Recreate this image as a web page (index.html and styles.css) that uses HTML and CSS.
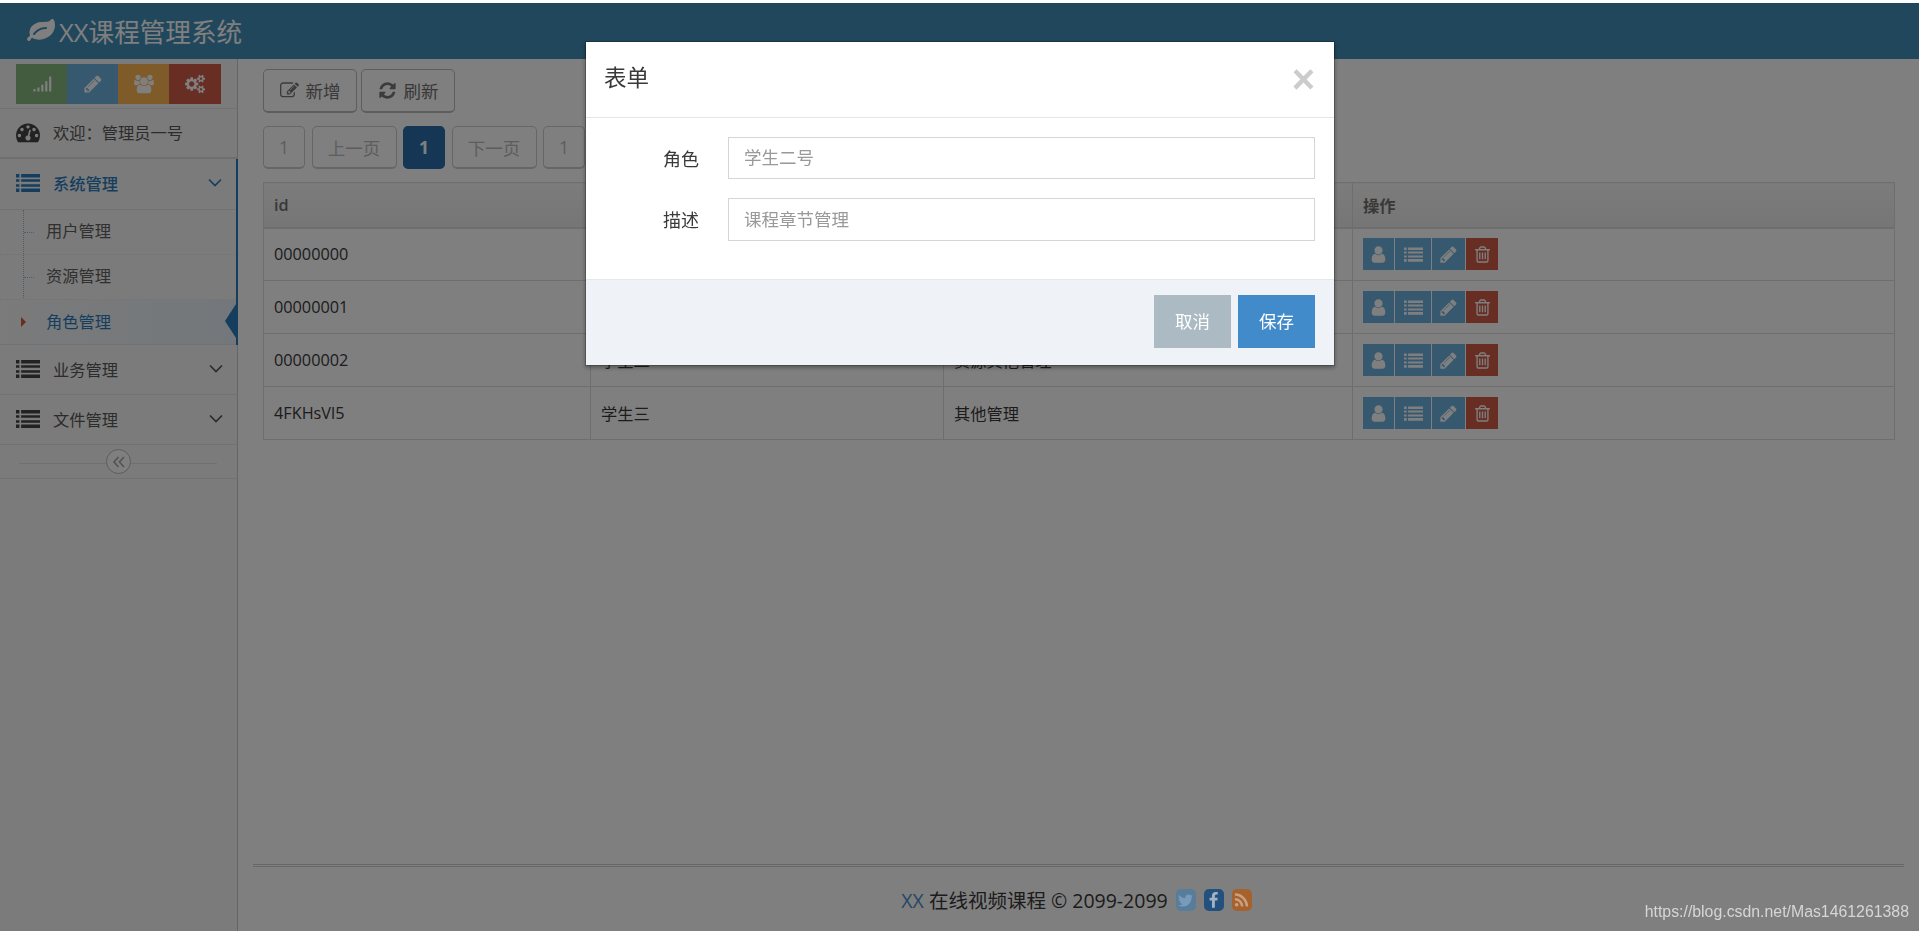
FILE: index.html
```html
<!DOCTYPE html>
<html lang="zh-CN">
<head>
    <meta charset="UTF-8">
    <title>XX课程管理系统</title>
    <link rel="stylesheet" href="styles.css">
</head>
<body>
<svg class="defs" xmlns="http://www.w3.org/2000/svg">
    <symbol id="i-leaf" viewBox="0 0 1792 1792"><path d="M1280 704q0-26-19-45t-45-19q-172 0-318 49.5t-259.5 134-235.5 219.5q-19 21-19 45 0 26 19 45t45 19q24 0 45-19 27-24 74-71t67-66q137-124 268.5-176t313.5-52q26 0 45-19t19-45zm512-198q0 95-20 193-46 224-184.5 383t-357.5 268q-214 108-438 108-148 0-286-47-15-5-88-42t-96-37q-16 0-39.5 32t-45 70-52.5 70-60 32q-43 0-63.5-17.5t-45.5-59.5q-2-4-6-11t-5.5-10-3-9.5-1.5-13.5q0-35 31-73.5t68-65.5 68-56 31-48q0-4-14-38t-16-44q-9-51-9-104 0-115 43.5-220t119-184.5 170.5-139 204-95.5q55-18 145-25.5t179.5-9 178.5-6 163.5-24 113.5-56.5l29.5-29.5 29.5-28 27-20 36.5-16 43.5-4.5q39 0 70.5 46t47.5 112 24 124 8 96z"/></symbol>
    <symbol id="i-signal" viewBox="0 0 1792 1792"><path d="M128 1344h192v224h-192zM480 1216h192v352h-192zM832 960h192v608h-192zM1184 640h192v928h-192zM1536 224h192v1344h-192z"/></symbol>
    <symbol id="i-pencil" viewBox="0 0 1792 1792"><path d="M491 1536l91-91-235-235-91 91v107h128v128h107zm523-928q0-22-22-22-10 0-17 7l-542 542q-7 7-7 17 0 22 22 22 10 0 17-7l542-542q7-7 7-17zm-54-192l416 416-832 832h-416v-416zm683 96q0 53-37 90l-166 166-416-416 166-165q36-38 90-38 53 0 91 38l235 234q37 39 37 91z"/></symbol>
    <symbol id="i-group" viewBox="0 0 1920 1792"><path d="M593 896q-162 5-265 128h-134q-82 0-138-40.5t-56-118.5q0-353 124-353 6 0 43.5 21t97.5 42.5 119 21.5q67 0 133-23-5 37-5 66 0 139 81 256zm1071 637q0 120-73 189.5t-194 69.5h-874q-121 0-194-69.5t-73-189.5q0-53 3.5-103.5t14-109 26.5-108.5 43-97.5 62-81 85.5-53.5 111.5-20q10 0 43 21.5t73 48 107 48 135 21.5 135-21.5 107-48 73-48 43-21.5q61 0 111.5 20t85.5 53.5 62 81 43 97.5 26.5 108.5 14 109 3.5 103.5zm-1024-1277q0 106-75 181t-181 75-181-75-75-181 75-181 181-75 181 75 75 181zm704 384q0 159-112.5 271.5t-271.5 112.5-271.5-112.5-112.5-271.5 112.5-271.5 271.5-112.5 271.5 112.5 112.5 271.5zm576 225q0 78-56 118.5t-138 40.5h-134q-103-123-265-128 81-117 81-256 0-29-5-66 66 23 133 23 59 0 119-21.5t97.5-42.5 43.5-21q124 0 124 353zm-128-609q0 106-75 181t-181 75-181-75-75-181 75-181 181-75 181 75 75 181z"/></symbol>
    <symbol id="i-cogs" viewBox="0 0 1920 1792"><path d="M896 896q0-106-75-181t-181-75-181 75-75 181 75 181 181 75 181-75 75-181zm768 512q0-52-38-90t-90-38-90 38-38 90q0 53 37.5 90.5t90.5 37.5 90.5-37.5 37.5-90.5zm0-1024q0-52-38-90t-90-38-90 38-38 90q0 53 37.5 90.5t90.5 37.5 90.5-37.5 37.5-90.5zm-384 421v185q0 10-7 19.5t-16 10.5l-155 24q-11 35-32 76 34 48 90 115 7 11 7 20 0 12-7 19-23 30-82.5 89.5t-78.5 59.5q-11 0-21-7l-115-90q-37 19-77 31-11 108-23 155-7 24-30 24h-186q-11 0-20-7.5t-10-17.5l-23-153q-34-10-75-31l-118 89q-7 7-20 7-11 0-21-8-144-133-144-160 0-9 7-19 10-14 41-53t47-61q-23-44-35-82l-152-24q-10-1-17-9.5t-7-19.5v-185q0-10 7-19.5t16-10.5l155-24q11-35 32-76-34-48-90-115-7-11-7-20 0-12 7-20 22-30 82-89t79-59q11 0 21 7l115 90q34-18 77-32 11-108 23-154 7-24 30-24h186q11 0 20 7.5t10 17.5l23 153q34 10 75 31l118-89q8-7 20-7 11 0 21 8 144 133 144 160 0 8-7 19-12 16-42 54t-45 60q23 48 34 82l152 23q10 2 17 10.5t7 19.5zm640 533v140q0 16-149 31-12 27-30 52 51 113 51 138 0 4-4 7-122 71-124 71-8 0-46-47t-52-68q-20 2-30 2t-30-2q-14 21-52 68t-46 47q-2 0-124-71-4-3-4-7 0-25 51-138-18-25-30-52-149-15-149-31v-140q0-16 149-31 13-29 30-52-51-113-51-138 0-4 4-7 4-2 35-20t59-34 30-16q8 0 46 46.5t52 67.5q20-2 30-2t30 2q51-71 92-112l6-2q4 0 124 70 4 3 4 7 0 25-51 138 17 23 30 52 149 15 149 31zm0-1024v140q0 16-149 31-12 27-30 52 51 113 51 138 0 4-4 7-122 71-124 71-8 0-46-47t-52-68q-20 2-30 2t-30-2q-14 21-52 68t-46 47q-2 0-124-71-4-3-4-7 0-25 51-138-18-25-30-52-149-15-149-31v-140q0-16 149-31 13-29 30-52-51-113-51-138 0-4 4-7 4-2 35-20t59-34 30-16q8 0 46 46.5t52 67.5q20-2 30-2t30 2q51-71 92-112l6-2q4 0 124 70 4 3 4 7 0 25-51 138 17 23 30 52 149 15 149 31z"/></symbol>
    <symbol id="i-dashboard" viewBox="0 0 1792 1792"><path d="M384 1152q0-53-37.5-90.5t-90.5-37.5-90.5 37.5-37.5 90.5 37.5 90.5 90.5 37.5 90.5-37.5 37.5-90.5zm192-448q0-53-37.5-90.5t-90.5-37.5-90.5 37.5-37.5 90.5 37.5 90.5 90.5 37.5 90.5-37.5 37.5-90.5zm428 481l101-382q6-26-7.5-48.5t-38.5-29.5-48 6.5-30 39.5l-101 382q-60 5-107 43.5t-63 98.5q-20 77 20 146t117 89 146-20 89-117q16-60-6-117t-72-91zm660-33q0-53-37.5-90.5t-90.5-37.5-90.5 37.5-37.5 90.5 37.5 90.5 90.5 37.5 90.5-37.5 37.5-90.5zm-640-640q0-53-37.5-90.5t-90.5-37.5-90.5 37.5-37.5 90.5 37.5 90.5 90.5 37.5 90.5-37.5 37.5-90.5zm448 192q0-53-37.5-90.5t-90.5-37.5-90.5 37.5-37.5 90.5 37.5 90.5 90.5 37.5 90.5-37.5 37.5-90.5zm320 448q0 261-141 483-19 29-54 29h-1402q-35 0-54-29-141-221-141-483 0-182 71-348t191-286 286-191 348-71 348 71 286 191 191 286 71 348z"/></symbol>
    <symbol id="i-list" viewBox="0 0 1792 1792"><path d="M0 224h256v256h-256zM0 608h256v192h-256zM0 992h256v192h-256zM0 1312h256v256h-256zM384 224h1408v256h-1408zM384 608h1408v192h-1408zM384 992h1408v192h-1408zM384 1312h1408v256h-1408z"/></symbol>
    <symbol id="i-edit" viewBox="0 0 1792 1792"><path d="M888 1184l116-116-152-152-116 116v56h96v96h56zm440-720q-16-16-33 1l-350 350q-17 17-1 33t33-1l350-350q17-17 1-33zm80 594v190q0 119-84.5 203.5t-203.5 84.5h-832q-119 0-203.5-84.5t-84.5-203.5v-832q0-119 84.5-203.5t203.5-84.5h832q63 0 117 25 15 7 18 23 3 17-9 29l-49 49q-14 14-32 8-23-6-45-6h-832q-66 0-113 47t-47 113v832q0 66 47 113t113 47h832q66 0 113-47t47-113v-126q0-13 9-22l64-64q15-15 35-7t20 29zm-96-738l288 288-672 672h-288v-288zm444 132l-92 92-288-288 92-92q28-28 68-28t68 28l152 152q28 28 28 68t-28 68z"/></symbol>
    <symbol id="i-refresh" viewBox="0 0 1792 1792"><path d="M1639 1056q0 5-1 7-64 268-268 434.5t-478 166.5q-146 0-282.5-55t-243.5-157l-129 129q-19 19-45 19t-45-19-19-45v-448q0-26 19-45t45-19h448q26 0 45 19t19 45-19 45l-137 137q71 66 161 102t187 36q134 0 250-65t186-179q11-17 53-117 8-23 30-23h192q13 0 22.5 9.5t9.5 22.5zm25-800v448q0 26-19 45t-45 19h-448q-26 0-45-19t-19-45 19-45l138-138q-148-137-349-137-134 0-250 65t-186 179q-11 17-53 117-8 23-30 23h-199q-13 0-22.5-9.5t-9.5-22.5v-7q65-268 270-434.5t480-166.5q146 0 284 55.5t245 156.5l130-129q19-19 45-19t45 19 19 45z"/></symbol>
    <symbol id="i-user" viewBox="0 0 1792 1792"><path d="M1536 1399q0 109-62.5 187t-150.5 78h-854q-88 0-150.5-78t-62.5-187q0-85 8.5-160.5t31.5-152 58.5-131 94-89 134.5-34.5q131 128 313 128t313-128q76 0 134.5 34.5t94 89 58.5 131 31.5 152 8.5 160.5zm-256-887q0 159-112.5 271.5t-271.5 112.5-271.5-112.5-112.5-271.5 112.5-271.5 271.5-112.5 271.5 112.5 112.5 271.5z"/></symbol>
    <symbol id="i-trash" viewBox="0 0 1792 1792"><path d="M704 736v576q0 14-9 23t-23 9h-64q-14 0-23-9t-9-23v-576q0-14 9-23t23-9h64q14 0 23 9t9 23zm256 0v576q0 14-9 23t-23 9h-64q-14 0-23-9t-9-23v-576q0-14 9-23t23-9h64q14 0 23 9t9 23zm256 0v576q0 14-9 23t-23 9h-64q-14 0-23-9t-9-23v-576q0-14 9-23t23-9h64q14 0 23 9t9 23zm128 724v-948h-896v948q0 22 7 40.5t14.5 27 10.5 8.5h832q3 0 10.5-8.5t14.5-27 7-40.5zm-672-1076h448l-48-117q-7-9-17-11h-317q-10 2-17 11zm928 32v64q0 14-9 23t-23 9h-96v948q0 83-47 143.5t-113 60.5h-832q-66 0-113-58.5t-47-141.5v-952h-96q-14 0-23-9t-9-23v-64q0-14 9-23t23-9h309l70-167q15-37 54-63t79-26h320q40 0 79 26t54 63l70 167h309q14 0 23 9t9 23z"/></symbol>
    <symbol id="i-twitter" viewBox="0 0 1792 1792"><path d="M1684 408q-67 98-162 167 1 14 1 42 0 130-38 259.5t-115.5 248.5-184.5 210.5-258 146-323 54.5q-271 0-496-145 35 4 78 4 225 0 401-138-105-2-188-64.5t-114-159.5q33 5 61 5 43 0 85-11-112-23-185.5-111.5t-73.5-205.5v-4q68 38 146 41-66-44-105-115t-39-154q0-88 44-163 121 149 294.5 238.5t371.5 99.5q-8-38-8-74 0-134 94.5-228.5t228.5-94.5q140 0 236 102 109-21 205-78-37 115-142 178 91-10 182-49z"/></symbol>
    <symbol id="i-facebook" viewBox="0 0 1792 1792"><path d="M1343 12v264h-157q-86 0-116 36t-30 108v189h293l-39 296h-254v759h-306v-759h-255v-296h255v-218q0-186 104-288.5t277-102.5q147 0 228 12z"/></symbol>
    <symbol id="i-rss" viewBox="0 0 1792 1792"><path d="M576 1344q0 80-56 136t-136 56-136-56-56-136 56-136 136-56 136 56 56 136zm512 123q2 28-17 48-18 21-47 21h-135q-25 0-43-16.5t-20-41.5q-22-229-184.5-391.5t-391.5-184.5q-25-2-41.5-20t-16.5-43v-135q0-29 21-47 17-17 43-17h5q160 13 306 80.5t259 181.5q114 113 181.5 259t80.5 306zm512 2q2 27-18 47-18 20-46 20h-143q-26 0-44.5-17.5t-19.5-42.5q-12-215-101-408.5t-231.5-336-336-231.5-408.5-102q-25-1-42.5-19.5t-17.5-43.5v-143q0-28 20-46 18-18 44-18h3q262 13 501.5 120t425.5 294q187 186 294 425.5t120 501.5z"/></symbol>
    <symbol id="i-down" viewBox="0 0 14 10"><path d="M1 1.5l6 6 6-6" fill="none" stroke="currentColor" stroke-width="1.7"/></symbol>
    <symbol id="i-collapse" viewBox="0 0 14 14"><path d="M6.5 2l-4.5 5 4.5 5M12 2l-4.5 5 4.5 5" fill="none" stroke="currentColor" stroke-width="1.8"/></symbol>
</svg>

<div class="page">
    <header class="navbar">
        <svg class="brand-icon"><use href="#i-leaf"/></svg>
        <span class="brand-text">XX课程管理系统</span>
    </header>

    <div class="layout">
        <aside class="sidebar">
            <div class="shortcuts">
                <a class="shortcut green"><svg><use href="#i-signal"/></svg></a>
                <a class="shortcut blue"><svg><use href="#i-pencil"/></svg></a>
                <a class="shortcut orange"><svg><use href="#i-group"/></svg></a>
                <a class="shortcut red"><svg><use href="#i-cogs"/></svg></a>
            </div>
            <div class="nav-row welcome">
                <svg class="nav-icon"><use href="#i-dashboard"/></svg>
                <span>欢迎：管理员一号</span>
            </div>
            <div class="nav-group open">
                <div class="nav-row parent">
                    <svg class="nav-icon"><use href="#i-list"/></svg>
                    <span>系统管理</span>
                    <svg class="nav-arrow"><use href="#i-down"/></svg>
                </div>
                <ul class="submenu">
                    <li>用户管理</li>
                    <li>资源管理</li>
                    <li class="active">角色管理</li>
                </ul>
            </div>
            <div class="nav-row">
                <svg class="nav-icon"><use href="#i-list"/></svg>
                <span>业务管理</span>
                <svg class="nav-arrow"><use href="#i-down"/></svg>
            </div>
            <div class="nav-row">
                <svg class="nav-icon"><use href="#i-list"/></svg>
                <span>文件管理</span>
                <svg class="nav-arrow"><use href="#i-down"/></svg>
            </div>
            <div class="collapse-bar">
                <span class="collapse-btn"><svg><use href="#i-collapse"/></svg></span>
            </div>
        </aside>

        <main class="main">
            <div class="toolbar">
                <button class="btn"><svg><use href="#i-edit"/></svg>新增</button>
                <button class="btn"><svg><use href="#i-refresh"/></svg>刷新</button>
            </div>
            <div class="pager">
                <a class="page-num">1</a>
                <a class="page-text">上一页</a>
                <a class="page-num current">1</a>
                <a class="page-text">下一页</a>
                <a class="page-num">1</a>
            </div>
            <table class="grid">
                <thead>
                <tr><th>id</th><th>角色</th><th>描述</th><th>操作</th></tr>
                </thead>
                <tbody>
                <tr>
                    <td>00000000</td><td>系统管理员</td><td>管理用户、权限、资源</td>
                    <td><div class="actions">
                        <a class="act a-user"><svg><use href="#i-user"/></svg></a><a class="act a-list"><svg><use href="#i-list"/></svg></a><a class="act a-edit"><svg><use href="#i-pencil"/></svg></a><a class="act a-del"><svg><use href="#i-trash"/></svg></a>
                    </div></td>
                </tr>
                <tr>
                    <td>00000001</td><td>学生一号</td><td>课程管理</td>
                    <td><div class="actions">
                        <a class="act a-user"><svg><use href="#i-user"/></svg></a><a class="act a-list"><svg><use href="#i-list"/></svg></a><a class="act a-edit"><svg><use href="#i-pencil"/></svg></a><a class="act a-del"><svg><use href="#i-trash"/></svg></a>
                    </div></td>
                </tr>
                <tr>
                    <td>00000002</td><td>学生二</td><td>资源其他管理</td>
                    <td><div class="actions">
                        <a class="act a-user"><svg><use href="#i-user"/></svg></a><a class="act a-list"><svg><use href="#i-list"/></svg></a><a class="act a-edit"><svg><use href="#i-pencil"/></svg></a><a class="act a-del"><svg><use href="#i-trash"/></svg></a>
                    </div></td>
                </tr>
                <tr>
                    <td>4FKHsVl5</td><td>学生三</td><td>其他管理</td>
                    <td><div class="actions">
                        <a class="act a-user"><svg><use href="#i-user"/></svg></a><a class="act a-list"><svg><use href="#i-list"/></svg></a><a class="act a-edit"><svg><use href="#i-pencil"/></svg></a><a class="act a-del"><svg><use href="#i-trash"/></svg></a>
                    </div></td>
                </tr>
                </tbody>
            </table>
            <footer class="footer">
                <div class="footer-inner">
                    <span class="footer-text"><b>XX</b> 在线视频课程 © 2099-2099</span>
                    <a class="social s-twitter"><svg><use href="#i-twitter"/></svg></a>
                    <a class="social s-facebook"><svg><use href="#i-facebook"/></svg></a>
                    <a class="social s-rss"><svg><use href="#i-rss"/></svg></a>
                </div>
            </footer>
        </main>
    </div>
</div>

<div class="backdrop"></div>

<div class="modal">
    <div class="modal-header">
        <h4>表单</h4>
        <span class="close">×</span>
    </div>
    <form class="modal-body">
        <label class="field">
            <span class="field-name">角色</span>
            <input type="text" placeholder="学生二号">
        </label>
        <label class="field">
            <span class="field-name">描述</span>
            <input type="text" placeholder="课程章节管理">
        </label>
    </form>
    <div class="modal-footer">
        <button class="modal-btn cancel">取消</button>
        <button class="modal-btn save">保存</button>
    </div>
</div>

<div class="watermark">https://blog.csdn.net/Mas1461261388</div>
</body>
</html>
```

FILE: styles.css
```css
* {
    box-sizing: border-box;
}
html, body {
    height: 100%;
}
body {
    margin: 0;
    overflow: hidden;
    background: #fff;
    color: #393939;
    font-family: "Open Sans", "Noto Sans CJK SC", sans-serif;
    font-size: 16.25px;
}
svg {
    fill: currentColor;
}
.defs {
    display: none;
}
.page {
    height: 100%;
    padding-top: 3px;
    display: flex;
    flex-direction: column;
}

/* navbar */
.navbar {
    height: 56px;
    flex: none;
    background: #438eb9;
    color: #fff;
    display: flex;
    align-items: center;
    padding-left: 27px;
}
.brand-icon {
    width: 28px;
    height: 28px;
    margin-right: 4px;
}
.brand-text {
    font-size: 25.6px;
    letter-spacing: 0;
}

.layout {
    flex: 1;
    display: flex;
    min-height: 0;
}

/* sidebar */
.sidebar {
    width: 238px;
    flex: none;
    background: #f6f6f6;
    border-right: 1px solid #ccc;
}
.shortcuts {
    height: 50px;
    padding: 5px 16px 0 16px;
    display: flex;
    border-bottom: 1px solid #e5e5e5;
}
.shortcut {
    width: 51px;
    height: 40px;
    display: flex;
    align-items: center;
    justify-content: center;
    color: #fff;
}
.shortcut:last-child {
    width: 52px;
}
.shortcut svg {
    width: 20px;
    height: 20px;
}
.green { background: #87b87f; }
.blue { background: #6fb3e0; }
.orange { background: #ffb752; }
.red { background: #d15b47; }

.nav-row {
    height: 50px;
    display: flex;
    align-items: center;
    padding: 0 0 2px 16px;
    color: #585858;
    border-bottom: 1px solid #e5e5e5;
}
.nav-icon {
    width: 24px;
    height: 24px;
    margin-right: 13px;
    color: #444;
}
.nav-arrow {
    width: 14px;
    height: 10px;
    margin-left: auto;
    margin-right: 14px;
}
.welcome {
    border-bottom-width: 2px;
    border-bottom-color: #ddd;
}
.nav-group.open {
    border-right: 2px solid #2b7dbc;
    margin-right: -1px;
}
.nav-group.open .nav-row {
    color: #2b7dbc;
    height: 51px;
    font-weight: 500;
}
.nav-group.open .nav-icon {
    color: #2b7dbc;
}
.submenu {
    list-style: none;
    margin: 0;
    padding: 0;
    position: relative;
    border-bottom: 1px solid #e5e5e5;
}
.submenu::before {
    content: "";
    position: absolute;
    left: 23px;
    top: 0;
    bottom: 0;
    border-left: 1px dotted #9dbdd6;
}
.submenu li {
    height: 45px;
    line-height: 43px;
    padding-left: 46px;
    color: #616161;
    border-bottom: 1px dotted #e4e4e4;
    position: relative;
}
.submenu li::before {
    content: "";
    position: absolute;
    left: 24px;
    top: 22px;
    width: 10px;
    border-top: 1px dotted #9dbdd6;
}
.submenu li.active {
    height: 44px;
    line-height: 45px;
    color: #2b7dbc;
    border-bottom: none;
    background: linear-gradient(90deg, #f6f6f6, #e6eff7);
}
.submenu li.active::before {
    left: 21px;
    top: 17px;
    width: 0;
    border: 5px solid transparent;
    border-left: 5px solid #c86139;
    border-right: none;
}
.submenu li.active::after {
    content: "";
    position: absolute;
    right: 0;
    top: 4px;
    border: 17.5px solid transparent;
    border-right: 11px solid #2b7dbc;
    border-left: none;
}
.collapse-bar {
    height: 34px;
    position: relative;
    border-bottom: 1px solid #e5e5e5;
    display: flex;
    justify-content: center;
    align-items: center;
}
.collapse-bar::before {
    content: "";
    position: absolute;
    left: 19px;
    right: 20px;
    top: 18px;
    border-top: 1px solid #e0e0e0;
}
.collapse-btn {
    position: relative;
    width: 25px;
    height: 25px;
    border-radius: 50%;
    background: #fff;
    border: 1px solid #bbb;
    color: #aaa;
    display: flex;
    align-items: center;
    justify-content: center;
}
.collapse-btn svg {
    width: 14px;
    height: 14px;
}

/* main */
.main {
    flex: 1;
    min-width: 0;
    padding: 10px 24px 0 25px;
    display: flex;
    flex-direction: column;
}
.toolbar {
    display: flex;
    gap: 4px;
}
.btn {
    height: 44px;
    padding: 0 15.5px;
    display: flex;
    align-items: center;
    font: inherit;
    font-size: 17.5px;
    color: #707070;
    background: #fff;
    border: 1px solid #bbb;
    border-bottom-width: 2px;
    border-radius: 5px;
}
.btn svg {
    width: 19px;
    height: 19px;
    margin-right: 7px;
    color: #777;
}
.pager {
    display: flex;
    gap: 6.5px;
    margin-top: 13px;
    font-size: 17.5px;
}
.pager a {
    height: 43px;
    display: flex;
    align-items: center;
    justify-content: center;
    color: #bbb;
    border: 1px solid #ccc;
    border-bottom-width: 2px;
    border-radius: 5px;
    background: #fff;
}
.page-num {
    width: 42px;
}
.page-text {
    width: 85px;
}
.pager .current {
    background: #2a6fab;
    border-color: #2a6fab;
    color: #fff;
    font-weight: 700;
}

.grid {
    width: 1632px;
    margin-top: 13px;
    border-collapse: collapse;
    table-layout: fixed;
}
.grid th:nth-child(1) { width: 327px; }
.grid th:nth-child(2) { width: 353px; }
.grid th:nth-child(3) { width: 409px; }
.grid th, .grid td {
    border: 1px solid #ddd;
    text-align: left;
    padding: 0 10px;
    font-weight: 400;
}
.grid th {
    height: 45px;
    color: #707070;
    font-weight: 600;
    background: linear-gradient(#f8f8f8, #ececec);
    border-bottom: 2px solid #ddd;
}
.grid td {
    height: 53px;
    color: #393939;
}
.actions {
    display: flex;
    gap: 1px;
}
.act {
    height: 32px;
    display: flex;
    align-items: center;
    justify-content: center;
    color: #fff;
    background: #6fb3e0;
}
.a-user { width: 31px; }
.a-list { width: 36px; }
.a-edit { width: 33px; }
.a-del {
    width: 32px;
    background: #d15b47;
}
.act svg {
    width: 19px;
    height: 19px;
}
.footer {
    margin-top: auto;
    margin-left: -10px;
    margin-right: -9px;
    height: 67px;
    border-top: 3px double #cfcfcf;
}
.footer-inner {
    display: flex;
    justify-content: center;
    align-items: flex-start;
    padding: 22px 4px 0 0;
    gap: 8px;
}
.footer-text {
    font-size: 19.5px;
    line-height: 24px;
}
.footer-text b {
    color: #478fca;
    font-weight: 400;
}
/* these keep their own brightness under the backdrop in the reference */
.social {
    position: relative;
    z-index: 1;
    width: 20px;
    height: 22px;
    border-radius: 5px;
    display: flex;
    align-items: center;
    justify-content: center;
}
.social svg {
    width: 17px;
    height: 17px;
}
.s-twitter { background: #587d9b; color: #789bb9; }
.s-facebook { background: #23507d; color: #a0b2c4; }
.s-rss { background: #a5622d; color: #c8a082; }

/* modal: the 3px strip above the navbar is not dimmed in the reference */
.backdrop {
    position: fixed;
    inset: 3px 0 0 0;
    background: rgba(0, 0, 0, .5);
}
.modal {
    position: fixed;
    left: 585px;
    top: 41px;
    width: 750px;
    background: #fff;
    border: 1px solid rgba(0, 0, 0, .2);
    box-shadow: 0 2px 4px rgba(0, 0, 0, .3);
    background-clip: padding-box;
}
.modal-header {
    height: 76px;
    padding: 0 19px 7px 18px;
    display: flex;
    align-items: center;
    justify-content: space-between;
    border-bottom: 1px solid #e5e5e5;
}
.modal-header h4 {
    margin: 0;
    font-size: 22.5px;
    font-weight: 400;
    color: #393939;
}
.close {
    font-family: "Liberation Sans", sans-serif;
    font-size: 40px;
    font-weight: 700;
    line-height: 1;
    color: #ccc;
    margin-top: 6px;
}
.modal-body {
    height: 161px;
    padding: 19px 19px 0 0;
    display: flex;
    flex-direction: column;
    gap: 19px;
}
.field {
    display: flex;
    align-items: center;
}
.field-name {
    width: 113px;
    padding-bottom: 1px;
    text-align: right;
    font-size: 18px;
    color: #393939;
    margin-right: 29px;
}
.field input {
    flex: 1;
    height: 42px;
    padding: 0 15px 2px;
    border: 1px solid #d5d5d5;
    font: inherit;
    font-size: 17.5px;
    outline: none;
}
.field + .field input {
    height: 43px;
}
.field input::placeholder {
    color: #999;
}
.modal-footer {
    height: 86px;
    padding: 15px 19px 0 0;
    display: flex;
    justify-content: flex-end;
    gap: 7px;
    background: #eff3f8;
    border-top: 1px solid #e4e9ee;
}
.modal-btn {
    width: 77px;
    height: 53px;
    padding: 0 0 3px;
    border: none;
    color: #fff;
    font: inherit;
    font-size: 17.5px;
}
.cancel { background: #abbac3; }
.save { background: #428bca; }

.watermark {
    position: fixed;
    right: 10px;
    bottom: 10px;
    font-family: "Liberation Sans", sans-serif;
    font-size: 15.85px;
    color: #d6d6d6;
}
```
